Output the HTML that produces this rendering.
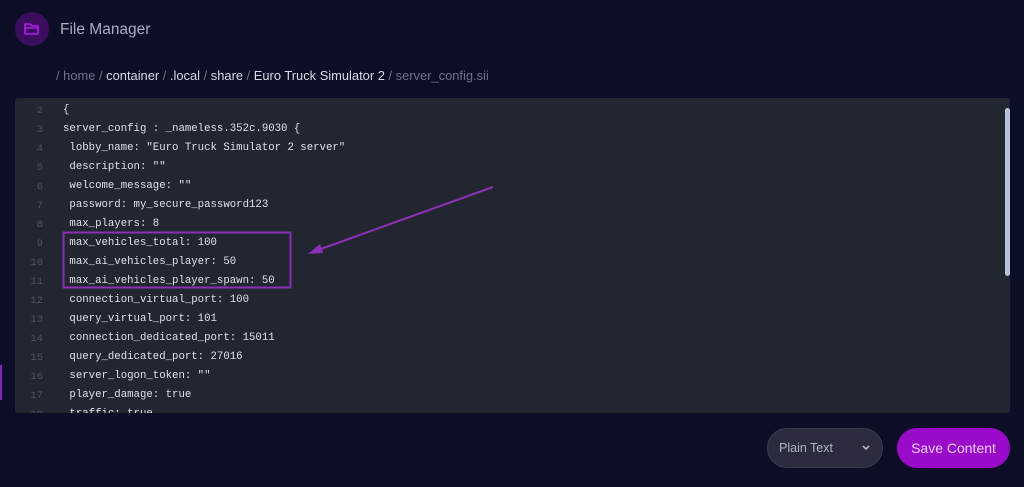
<!DOCTYPE html>
<html><head><style>
body{margin:0;width:1024px;height:487px;background:#0c0d27;position:relative;overflow:hidden;font-family:"Liberation Sans",sans-serif}
.ic{position:absolute;left:15px;top:12px;width:34px;height:34px;border-radius:50%;background:#3b0d5e}
.title{position:absolute;left:60px;top:21px;color:#a9adbf;font-size:15.5px}
.bc{position:absolute;left:56px;top:68px;font-size:12.9px;color:#6e7185}
.bc b{font-weight:normal;color:#d8dae3}
.ed{position:absolute;left:15px;top:98px;width:995px;height:315px;background:#222631;border-radius:3px;overflow:hidden}
.ln{position:absolute;left:0;width:28px;text-align:right;color:#4e5363;font:10.5px "Liberation Mono",monospace}
.tx{position:absolute;left:48px;color:#dfe1e6;font:10.7px "Liberation Mono",monospace;white-space:pre}
.sb{position:absolute;left:1005px;top:108px;width:5px;height:168px;background:#b4c4d8;border-radius:3px}
.sel{position:absolute;left:767px;top:428px;width:116px;height:40px;border-radius:20px;background:#2a2c3e;border:1px solid #3a3c4e;box-sizing:border-box;color:#b0b3c2;font-size:12.5px;line-height:38px;padding-left:11px}
.save{position:absolute;left:897px;top:428px;width:113px;height:40px;border-radius:20px;background:#9b0ac9;color:#ecd0f5;font-size:14px;line-height:40px;text-align:center}
</style></head><body>
<div class="ic"><svg width="34" height="34" viewBox="0 0 34 34"><path d="M10 12h5l2 2h6v8h-13z" fill="none" stroke="#b01ee8" stroke-width="1.6" stroke-linejoin="round"/><path d="M10 16h13" stroke="#b01ee8" stroke-width="1.4"/></svg></div>
<div class="title">File Manager</div>
<div class="bc">/ home / <b>container</b> / <b>.local</b> / <b>share</b> / <b>Euro Truck Simulator 2</b> / server_config.sii</div>
<div class="ed" id="ed"></div>
<div class="sb"></div>
<div style="position:absolute;left:0;top:365px;width:2px;height:35px;background:#8a1fc0"></div>
<svg style="position:absolute;left:0;top:0" width="1024" height="487">
<rect x="63.5" y="232.5" width="227" height="55" fill="none" stroke="#8e2fb8" stroke-width="2"/>
<line x1="493" y1="187" x2="318" y2="250" stroke="#8e2fb8" stroke-width="2"/>
<polygon points="308,254 320,244 323,253" fill="#8e2fb8"/>
</svg>
<div class="sel">Plain Text<svg style="position:absolute;left:94px;top:16px" width="8" height="6"><path d="M1 1l3 3 3-3" fill="none" stroke="#c0c2cc" stroke-width="1.5"/></svg></div>
<div class="save">Save Content</div>
<script>
var L=['{','server_config : _nameless.352c.9030 {',' lobby_name: "Euro Truck Simulator 2 server"',' description: ""',' welcome_message: ""',' password: my_secure_password123',' max_players: 8',' max_vehicles_total: 100',' max_ai_vehicles_player: 50',' max_ai_vehicles_player_spawn: 50',' connection_virtual_port: 100',' query_virtual_port: 101',' connection_dedicated_port: 15011',' query_dedicated_port: 27016',' server_logon_token: ""',' player_damage: true',' traffic: true'];
var h='';L.forEach(function(s,i){var y=6+i*19;h+='<div class="ln" style="top:'+(y+1)+'px">'+(i+2)+'</div><div class="tx" style="top:'+y+'px">'+s.replace(/</g,'&lt;')+'</div>';});
document.getElementById('ed').innerHTML=h;
</script>
</body></html>
